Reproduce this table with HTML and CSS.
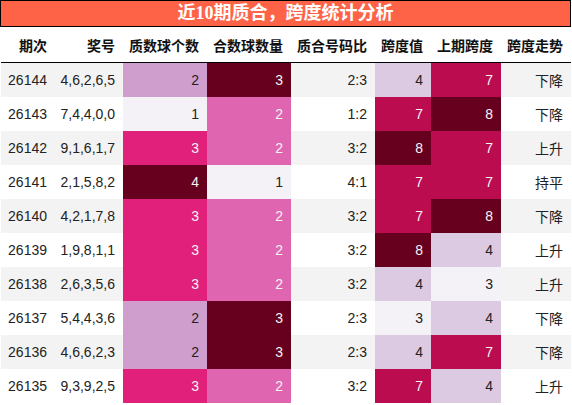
FILE: index.html
```html
<!DOCTYPE html>
<html lang="zh">
<head>
<meta charset="utf-8">
<link rel="stylesheet" href="styles.css">
</head>
<body>
<div class="wrap">
  <div class="title">近10期质合，跨度统计分析</div>
  <table class="stats">
    <colgroup>
      <col class="w-qi"><col class="w-hao"><col class="w-84"><col class="w-84"><col class="w-84"><col class="w-kd"><col class="w-70"><col class="w-70b">
    </colgroup>
    <thead>
      <tr><th>期次</th><th>奖号</th><th>质数球个数</th><th>合数球数量</th><th>质合号码比</th><th>跨度值</th><th>上期跨度</th><th>跨度走势</th></tr>
    </thead>
    <tbody>
      <tr><td>26144</td><td>4,6,2,6,5</td><td class="c3">2</td><td class="c7">3</td><td>2:3</td><td class="c2">4</td><td class="c6">7</td><td>下降</td></tr>
      <tr><td>26143</td><td>7,4,4,0,0</td><td class="c1">1</td><td class="c4">2</td><td>1:2</td><td class="c6">7</td><td class="c7">8</td><td>下降</td></tr>
      <tr><td>26142</td><td>9,1,6,1,7</td><td class="c5">3</td><td class="c4">2</td><td>3:2</td><td class="c7">8</td><td class="c6">7</td><td>上升</td></tr>
      <tr><td>26141</td><td>2,1,5,8,2</td><td class="c7">4</td><td class="c1">1</td><td>4:1</td><td class="c6">7</td><td class="c6">7</td><td>持平</td></tr>
      <tr><td>26140</td><td>4,2,1,7,8</td><td class="c5">3</td><td class="c4">2</td><td>3:2</td><td class="c6">7</td><td class="c7">8</td><td>下降</td></tr>
      <tr><td>26139</td><td>1,9,8,1,1</td><td class="c5">3</td><td class="c4">2</td><td>3:2</td><td class="c7">8</td><td class="c2">4</td><td>上升</td></tr>
      <tr><td>26138</td><td>2,6,3,5,6</td><td class="c5">3</td><td class="c4">2</td><td>3:2</td><td class="c2">4</td><td class="c1">3</td><td>上升</td></tr>
      <tr><td>26137</td><td>5,4,4,3,6</td><td class="c3">2</td><td class="c7">3</td><td>2:3</td><td class="c1">3</td><td class="c2">4</td><td>下降</td></tr>
      <tr><td>26136</td><td>4,6,6,2,3</td><td class="c3">2</td><td class="c7">3</td><td>2:3</td><td class="c2">4</td><td class="c6">7</td><td>下降</td></tr>
      <tr><td>26135</td><td>9,3,9,2,5</td><td class="c5">3</td><td class="c4">2</td><td>3:2</td><td class="c6">7</td><td class="c2">4</td><td>上升</td></tr>
    </tbody>
  </table>
</div>
</body>
</html>
```
FILE: styles.css
```css
html, body {
  margin: 0;
  padding: 0;
  background: #ffffff;
}
.wrap {
  width: 571px;
}
.title {
  box-sizing: border-box;
  height: 27px;
  border: 1px solid #000;
  background: #ff6347;
  color: #ffffff;
  font-family: "Liberation Serif", "Noto Sans CJK SC", serif;
  font-weight: bold;
  font-size: 18px;
  line-height: 24px;
  text-align: center;
}
.stats {
  width: 570px;
  margin-left: 1px;
  border-collapse: collapse;
  table-layout: fixed;
  font-family: "Liberation Sans", "Noto Sans CJK SC", sans-serif;
  font-size: 14px;
  color: #222;
}
.w-qi { width: 54px; }
.w-hao { width: 68px; }
.w-84 { width: 84px; }
.w-kd { width: 56px; }
.w-70 { width: 70px; }
.w-70b { width: 70px; }
.stats th {
  height: 35px;
  padding: 0 8px 0 0;
  text-align: right;
  font-family: "Noto Sans CJK SC", sans-serif;
  font-weight: bold;
  font-size: 14px;
  color: #111;
  border-bottom: 1px solid #000;
  white-space: nowrap;
}
.stats td {
  height: 34px;
  padding: 0 8px 0 0;
  text-align: right;
  white-space: nowrap;
}
.stats tbody tr:nth-child(odd) { background: #f3f3f3; }
.stats tbody tr:nth-child(even) { background: #ffffff; }
.stats td.c1 { background: #f4f1f7; color: #222; }
.stats td.c2 { background: #dccae2; color: #222; }
.stats td.c3 { background: #cf9ecc; color: #222; }
.stats td.c4 { background: #df65b0; color: #f4f4f4; }
.stats td.c5 { background: #e0207a; color: #f4f4f4; }
.stats td.c6 { background: #bb0c4f; color: #f4f4f4; }
.stats td.c7 { background: #67001f; color: #f4f4f4; }
```
